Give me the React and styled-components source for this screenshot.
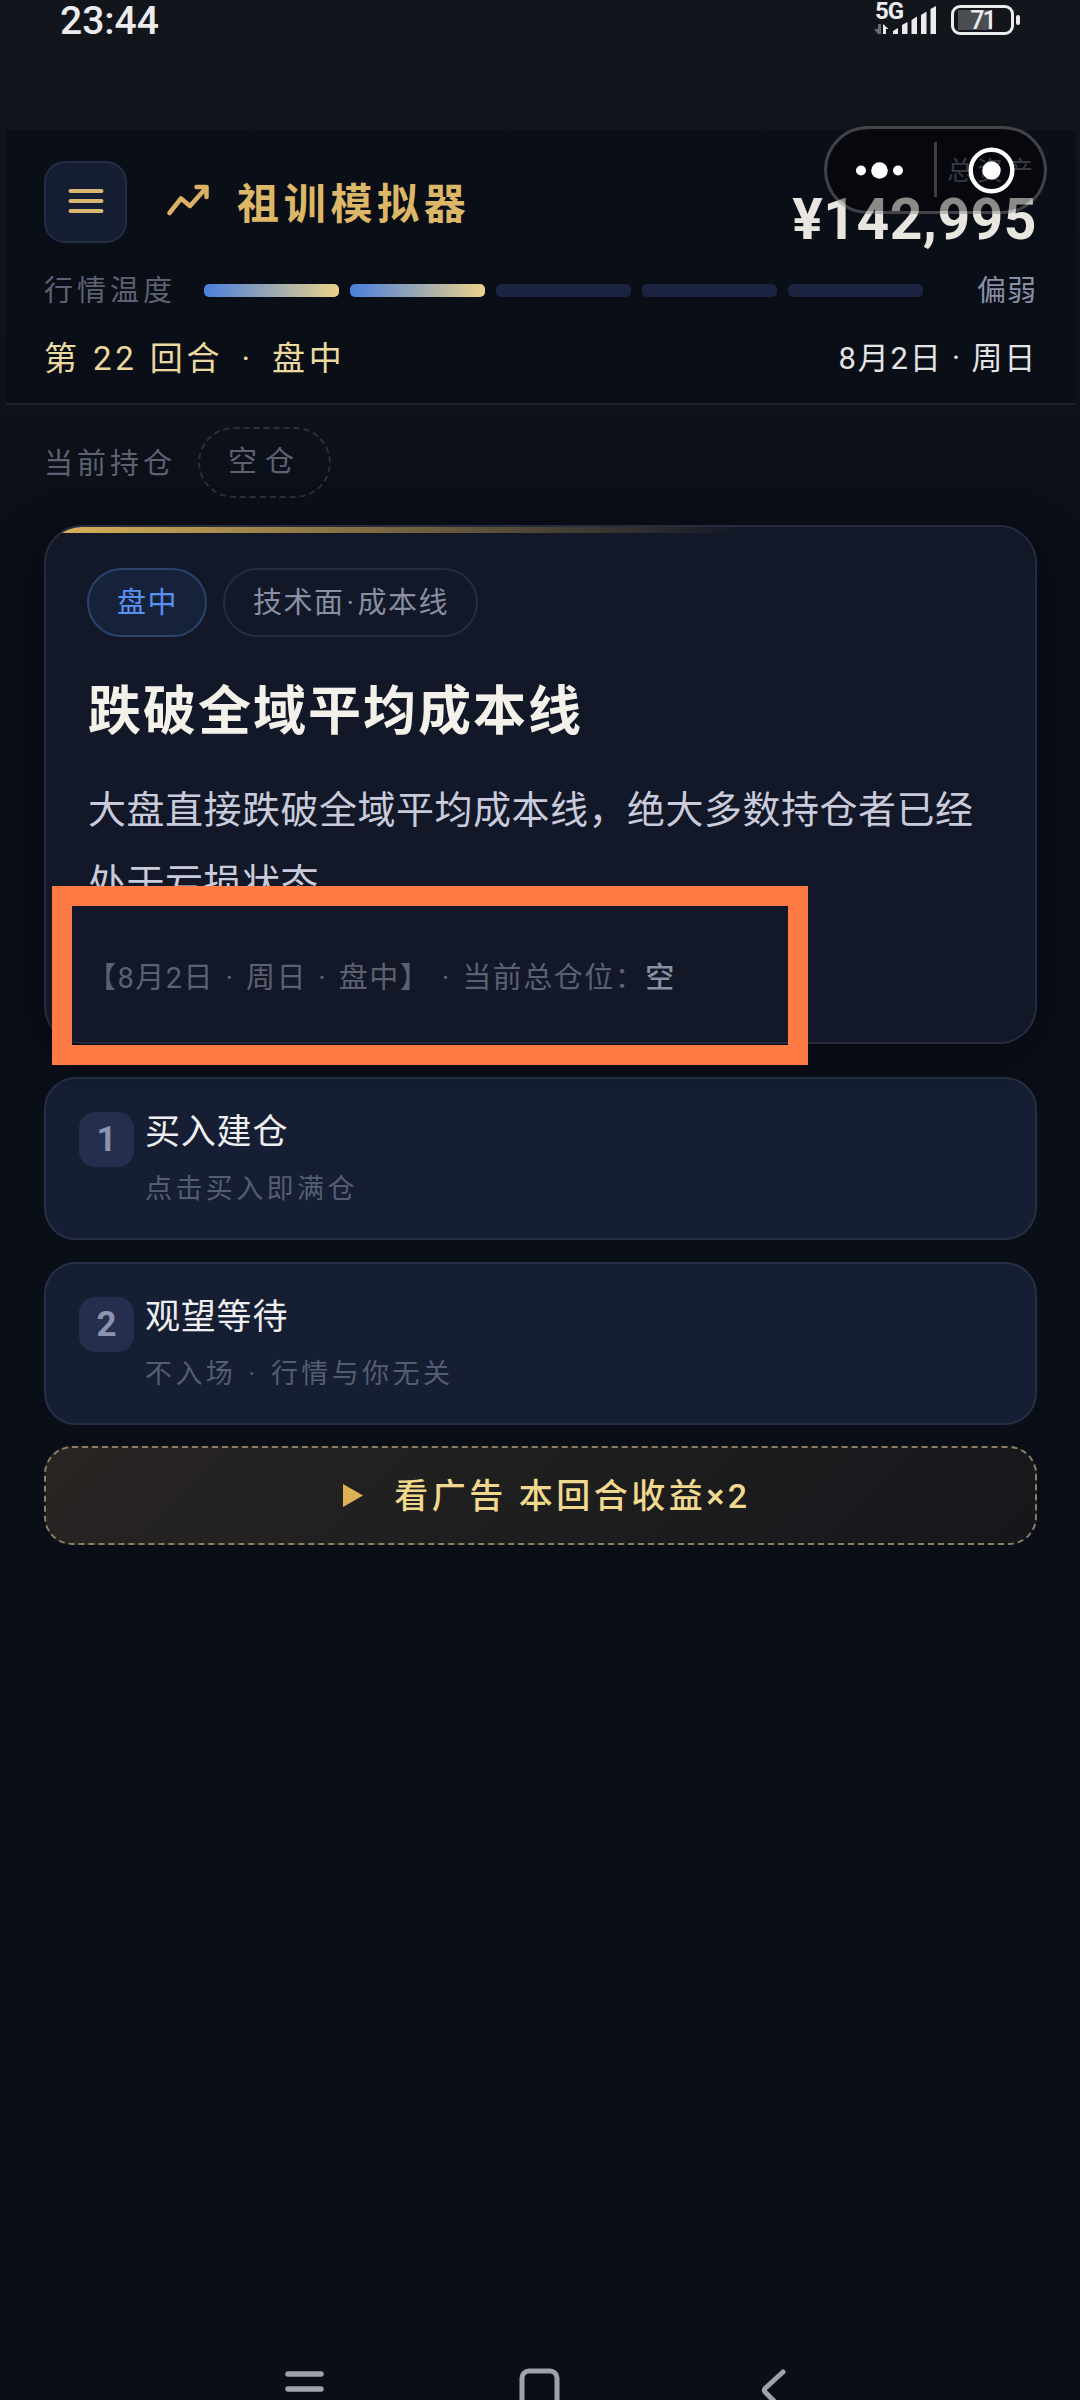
import React, { useState } from "react";
import styled, { createGlobalStyle, css } from "styled-components";

const heat = [true, true, false, false, false];

const options = [
  { id: 1, title: "买入建仓", desc: ["点击买入即满仓"] },
  { id: 2, title: "观望等待", desc: ["不入场 ", " 行情与你无关"] },
];

const StatusBar = () => (
  <StatusRow>
    <Clock>23:44</Clock>
    <StatusIcons>
      <Signal>
        <Network>5G</Network>
        <svg width="64" height="36" viewBox="0 0 64 36">
          <path d="M4 34 L0 29 H4 V24 H7 V34 Z" fill="#6a6b6e" />
          <path d="M9 34 V24 L14.5 29 H12 V34 Z" fill="#ebebed" />
          <g fill="#ebebed">
            <path d="M19 34 V31 L24 28 V34 Z" />
            <path d="M28 34 V25 L33.500 22 V34 Z" />
            <path d="M37.500 34 V20 L43 16.500 V34 Z" />
            <path d="M47 34 V15 L52.500 11.500 V34 Z" />
            <path d="M56.500 34 V9 L62 6 V34 Z" />
          </g>
        </svg>
      </Signal>
      <Battery>
        <Level>71</Level>
      </Battery>
    </StatusIcons>
  </StatusRow>
);

const Option = ({ option, picked, onPick }) => (
  <OptionCard type="button" aria-pressed={picked} onClick={() => onPick(option.id)}>
    <Index>{option.id}</Index>
    <OptionBody>
      <OptionTitle>{option.title}</OptionTitle>
      <OptionDesc>
        {option.desc.map((part, i) => (
          <React.Fragment key={part}>
            {i > 0 && <Dot $gap={2}>·</Dot>}
            {part}
          </React.Fragment>
        ))}
      </OptionDesc>
    </OptionBody>
  </OptionCard>
);

export default function App() {
  const [picked, setPicked] = useState(null);

  return (
    <Page>
      <GlobalStyle />
      <StatusBar />
      <Header>
        <TopRow>
          <MenuButton type="button" aria-label="菜单">
            <svg width="36" height="26" viewBox="0 0 36 26" stroke="#d9b874" strokeWidth="4" strokeLinecap="round">
              <path d="M2.500 3 H33.500 M2.500 13 H33.500 M2.500 23 H33.500" />
            </svg>
          </MenuButton>
          <Brand>
            <svg width="42" height="32" viewBox="0 0 42 32" fill="none" stroke="#dcb163" strokeWidth="4.500" strokeLinecap="round" strokeLinejoin="round">
              <path d="M2.500 29 L14 14.500 L23 22 L39 4" />
              <path d="M29.500 3 H39.500 V13" />
            </svg>
            <BrandName>祖训模拟器</BrandName>
          </Brand>
          <Assets>
            <AssetsLabel>总资产</AssetsLabel>
            <AssetsValue>¥142,995</AssetsValue>
          </Assets>
        </TopRow>
        <HeatRow>
          <Label>行情温度</Label>
          <Bars>
            {heat.map((on, i) => (
              <Bar key={i} $on={on} />
            ))}
          </Bars>
          <Mood>偏弱</Mood>
        </HeatRow>
        <RoundRow>
          <Round>
            第 22 回合 <Dot $gap={6}>·</Dot> 盘中
          </Round>
          <DateText>8月2日 · 周日</DateText>
        </RoundRow>
        <Capsule>
          <svg width="217" height="82" viewBox="0 0 217 82">
            <g fill="#fff">
              <circle cx="34" cy="41.500" r="5" />
              <circle cx="52.500" cy="41.500" r="8.300" />
              <circle cx="71" cy="41.500" r="5" />
              <circle cx="164.500" cy="41.500" r="9.200" />
            </g>
            <path d="M108.500 13 V68" stroke="#3c3e43" strokeWidth="3" />
            <circle cx="164.500" cy="41.500" r="20.800" fill="none" stroke="#fff" strokeWidth="4.400" />
          </svg>
        </Capsule>
      </Header>
      <Main>
        <HoldingRow>
          <Label>当前持仓</Label>
          <EmptyPill>空仓</EmptyPill>
        </HoldingRow>
        <EventCard>
          <Tags>
            <Tag $blue>盘中</Tag>
            <Tag>
              技术面<Dot $gap={2}>·</Dot>成本线
            </Tag>
          </Tags>
          <EventTitle>跌破全域平均成本线</EventTitle>
          <EventText>大盘直接跌破全域平均成本线，绝大多数持仓者已经处于亏损状态</EventText>
          <Meta>
            【8月2日 <Dot $gap={2.7}>·</Dot> 周日 <Dot $gap={2.7}>·</Dot> 盘中】 <Dot $gap={2.7}>·</Dot> 当前总仓位：<b>空</b>
          </Meta>
          <Marker />
        </EventCard>
        <Options>
          {options.map((option) => (
            <Option key={option.id} option={option} picked={picked === option.id} onPick={setPicked} />
          ))}
        </Options>
        <AdButton type="button">
          <svg width="20" height="23" viewBox="0 0 20 23">
            <path d="M0 0 L20 11.500 L0 23 Z" fill="#ddb255" />
          </svg>
          <AdText>看广告 本回合收益×2</AdText>
        </AdButton>
      </Main>
      <NavBar>
        <svg width="39" height="32" viewBox="0 0 39 32" stroke="#a0a2a8" strokeWidth="5.500" strokeLinecap="round">
          <path d="M3 6 H36 M3 21 H36" />
        </svg>
        <svg width="41" height="32" viewBox="0 0 41 32" fill="none" stroke="#a0a2a8" strokeWidth="5">
          <rect x="3" y="3" width="35" height="36" rx="7" />
        </svg>
        <svg width="28" height="32" viewBox="0 0 28 32" fill="none" stroke="#a0a2a8" strokeWidth="5" strokeLinecap="round" strokeLinejoin="round">
          <path d="M23 4 L5.500 20 Q3 22 5.500 24.500 L23 42" />
        </svg>
      </NavBar>
    </Page>
  );
}

const GlobalStyle = createGlobalStyle`
  * {
    box-sizing: border-box;
  }
  body {
    margin: 0;
    background: #0a0e17;
    font-family: Roboto, "Noto Sans CJK SC", sans-serif;
  }
  button {
    font-family: inherit;
    cursor: pointer;
  }
  svg {
    display: block;
    flex-shrink: 0;
  }
`;

const Page = styled.div`
  width: 1080px;
  height: 2400px;
  display: flex;
  flex-direction: column;
  overflow: hidden;
  background: linear-gradient(#12151c 0, #11141b 130px, #0d111a 410px, #0a0e17 560px);
`;

const Dot = styled.span`
  margin: 0 ${({ $gap }) => $gap}px;
`;

const StatusRow = styled.div`
  display: flex;
  justify-content: space-between;
  height: 131px;
  padding: 0 60px;
`;

const Clock = styled.div`
  height: 42px;
  line-height: 42px;
  font-family: Roboto, sans-serif;
  font-size: 39px;
  font-weight: 500;
  color: #ebebed;
`;

const StatusIcons = styled.div`
  display: flex;
  gap: 13px;
  height: 36px;
`;

const Signal = styled.div`
  position: relative;
`;

const Network = styled.span`
  position: absolute;
  left: 1px;
  top: 0;
  font-family: Roboto, sans-serif;
  font-size: 24px;
  line-height: 23px;
  font-weight: 700;
  letter-spacing: -1px;
  color: #ebebed;
`;

const Battery = styled.div`
  position: relative;
  width: 63px;
  height: 30px;
  margin: 5px 6px 0 0;
  border: 3px solid #ebebed;
  border-radius: 9px;
  background: linear-gradient(#4c4d51, #4c4d51) 4px 2px / 34px 20px no-repeat;

  &::after {
    content: "";
    position: absolute;
    right: -9px;
    top: 7px;
    width: 4px;
    height: 10px;
    border-radius: 2px;
    background: #ebebed;
  }
`;

const Level = styled.div`
  height: 24px;
  line-height: 25px;
  text-align: center;
  font-size: 25px;
  font-weight: 500;
  letter-spacing: -2px;
  color: #ebebed;
`;

const Header = styled.header`
  position: relative;
  height: 274px;
  margin: 0 4px 0 6px;
  padding: 26px 39px 0 38px;
  background: #0a0e17;
  border-bottom: 2px solid #1b202d;
`;

const TopRow = styled.div`
  display: flex;
  align-items: flex-start;
`;

const MenuButton = styled.button`
  display: flex;
  align-items: center;
  justify-content: center;
  width: 83px;
  height: 82px;
  margin-top: 4px;
  padding: 0 0 2px;
  border: 2px solid #242d45;
  border-radius: 21px;
  background: #151e33;
`;

const Brand = styled.div`
  display: flex;
  align-items: center;
  gap: 28px;
  height: 86px;
  margin-left: 40px;
`;

const BrandName = styled.h1`
  margin: 0;
  padding-top: 9px;
  font-size: 42px;
  line-height: 60px;
  font-weight: 700;
  letter-spacing: 4.700px;
  color: #dcb768;
`;

const Assets = styled.div`
  display: flex;
  flex-direction: column;
  align-items: flex-end;
  margin-left: auto;
`;

const AssetsLabel = styled.span`
  height: 30px;
  line-height: 28px;
  font-size: 26px;
  letter-spacing: 4px;
  color: #5d6172;
`;

const AssetsValue = styled.span`
  height: 66px;
  line-height: 66px;
  font-size: 57px;
  font-weight: 700;
  letter-spacing: 0.500px;
  color: #e8e6df;
`;

const HeatRow = styled.div`
  display: flex;
  align-items: center;
  height: 40px;
  margin-top: 17px;
`;

const Label = styled.span`
  padding-top: 2px;
  line-height: 40px;
  font-size: 29px;
  letter-spacing: 4px;
  color: #5d6172;
`;

const Bars = styled.div`
  flex: 1;
  display: flex;
  gap: 11px;
  margin: 0 54px 0 28px;
`;

const Bar = styled.span`
  flex: 1;
  height: 13px;
  border-radius: 5px;
  background: ${({ $on }) => ($on ? "linear-gradient(90deg, #4a7fdc, #ecd28a)" : "#1c2340")};
`;

const Mood = styled.span`
  padding-top: 2px;
  font-size: 29px;
  line-height: 40px;
  letter-spacing: 1px;
  color: #8a8fa5;
`;

const RoundRow = styled.div`
  display: flex;
  justify-content: space-between;
  align-items: center;
  height: 44px;
  margin-top: 24px;
`;

const Round = styled.span`
  font-size: 33px;
  letter-spacing: 3.850px;
  color: #ecd9a0;
`;

const DateText = styled.span`
  padding-bottom: 1px;
  font-size: 31px;
  letter-spacing: 1.800px;
  color: #e4e4e4;
`;

const Capsule = styled.div`
  position: absolute;
  left: 818px;
  top: -5px;
  width: 223px;
  height: 88px;
  border: 3px solid rgba(130, 130, 134, 0.45);
  border-radius: 44px;
  background: rgba(0, 0, 0, 0.4);
  background-clip: padding-box;
`;

const Main = styled.main`
  flex: 1;
  padding: 22px 43px 0 44px;
`;

const HoldingRow = styled.div`
  display: flex;
  align-items: center;
  gap: 22px;
  height: 71px;
`;

const EmptyPill = styled.span`
  width: 133px;
  height: 71px;
  padding-left: 28px;
  border: 2px dashed #2b3040;
  border-radius: 36px;
  line-height: 67px;
  font-size: 29px;
  letter-spacing: 8px;
  color: #5d6172;
`;

const EventCard = styled.section`
  position: relative;
  height: 519px;
  margin-top: 27px;
  padding: 41px 41px 0 42px;
  border: 2px solid #262c3e;
  border-radius: 38px;
  background: linear-gradient(90deg, #dcb45a, rgba(220, 180, 90, 0) 70%) 0 0 / 100% 6px no-repeat, #121827;
  box-shadow: 0 12px 50px rgba(0, 0, 0, 0.35);
`;

const Tags = styled.div`
  display: flex;
  gap: 16px;
  margin-left: -1px;
`;

const Tag = styled.span`
  height: 69px;
  padding: 0 27px 0 28px;
  border: 2px solid #262c3e;
  border-radius: 35px;
  line-height: 67px;
  font-size: 29px;
  letter-spacing: 1.500px;
  color: #8a8ea2;
  ${({ $blue }) =>
    $blue &&
    css`
      border-color: #2a426c;
      background: #162239;
      color: #5990f2;
    `}
`;

const EventTitle = styled.h2`
  margin: 39px 0 0;
  line-height: 72px;
  font-size: 53px;
  font-weight: 700;
  letter-spacing: 2px;
  color: #f3f1ea;
`;

const EventText = styled.p`
  margin: 26px 0 0;
  line-height: 73px;
  font-size: 38px;
  letter-spacing: 0.500px;
  color: #c9cbdc;
`;

const Meta = styled.p`
  margin: 38px 0 0 -1px;
  line-height: 40px;
  font-size: 29px;
  letter-spacing: 1.500px;
  color: #5c6071;

  b {
    font-weight: 500;
    color: #8a8ea2;
  }
`;

/* highlight frame laid over the card's footer */
const Marker = styled.div`
  position: absolute;
  left: 6px;
  top: 359px;
  width: 756px;
  height: 179px;
  border: 20px solid #ff7b45;
`;

const Options = styled.div`
  display: flex;
  flex-direction: column;
  gap: 22px;
  margin-top: 33px;
`;

const OptionCard = styled.button`
  display: flex;
  align-items: flex-start;
  gap: 11px;
  height: 163px;
  padding: 33px 33px 0;
  border: 2px solid #262f45;
  border-radius: 32px;
  background: #151e32;
  text-align: left;
`;

const Index = styled.span`
  width: 55px;
  height: 55px;
  border-radius: 16px;
  background: #252e4c;
  line-height: 55px;
  text-align: center;
  font-size: 35px;
  font-weight: 700;
  color: #8b93b0;
`;

const OptionBody = styled.div`
  display: flex;
  flex-direction: column;
`;

const OptionTitle = styled.span`
  height: 38px;
  line-height: 41px;
  font-size: 35px;
  letter-spacing: 0.800px;
  color: #eeeef0;
`;

const OptionDesc = styled.span`
  margin-top: 22px;
  line-height: 35px;
  font-size: 27px;
  letter-spacing: 3.400px;
  color: #555d74;
`;

const AdButton = styled.button`
  display: flex;
  align-items: center;
  justify-content: center;
  gap: 31px;
  width: 100%;
  height: 99px;
  margin-top: 21px;
  padding: 0 0 0 13px;
  border: 2px dashed #8a7f60;
  border-radius: 28px;
  background: linear-gradient(135deg, #282523, #15171b);
`;

const AdText = styled.span`
  padding-bottom: 4px;
  font-size: 34px;
  font-weight: 500;
  letter-spacing: 3.500px;
  color: #f0d88f;
`;

const NavBar = styled.nav`
  display: flex;
  height: 32px;
  padding-left: 285px;

  svg:nth-child(2) {
    margin-left: 195px;
  }
  svg:nth-child(3) {
    margin-left: 200px;
  }
`;
